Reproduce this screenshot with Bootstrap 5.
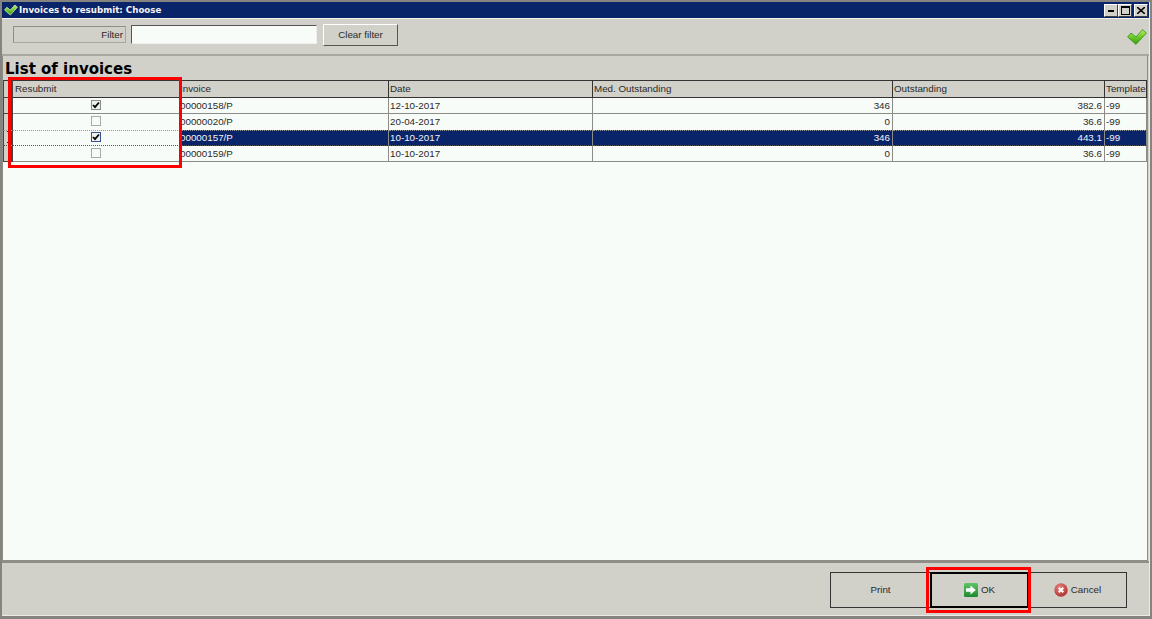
<!DOCTYPE html>
<html lang="en">
<head>
<meta charset="utf-8">
<title>Invoices to resubmit: Choose</title>
<link href="https://cdn.jsdelivr.net/npm/bootstrap@5.3.0/dist/css/bootstrap.min.css" rel="stylesheet">
<style>
html,body{height:619px;overflow:hidden;}
body{background:#85847f;font-family:"Liberation Sans",Arial,sans-serif;font-size:9.8px;color:#2a2a2a;line-height:1;}
.win{height:619px;padding:2px 2px 3px 2px;position:relative;}
.winbody{height:100%;background:#d1d0c9;border-right:1px solid #ecebe5;border-bottom:1px solid #ecebe5;}
.titlebar{height:16px;background:#0a246a;color:#f4f4f4;font-family:"DejaVu Sans",sans-serif;font-weight:700;font-size:8.7px;padding-left:2px;}
.titletext{margin-left:1px;}
.capbtn{width:14px;height:13px;background:#d1d0c9;border:1px solid;border-color:#fff #404040 #404040 #fff;color:#000;}
.capwrap{padding-right:1px;}
.cap-gap{margin-left:2px;}
.toolbar{height:38px;padding:6px 2px 0 11px;border-bottom:2px solid #a8a79f;border-top:1px solid #f2f1ec;}
.fltlabel{width:113px;height:17px;margin-top:1px;border:1px solid #8f8d87;border-right-color:#a8a79f;border-bottom-color:#a8a79f;padding-right:2px;}
.fltinput{width:186px;height:19px;margin-left:5px;background:#f8fcf8;border:1px solid;border-color:#555 #eee #eee #555;border-radius:0;padding:0 2px;font-size:10px;}
.clearbtn{width:75px;height:22px;margin-left:6px;margin-top:-1px;background:#d1d0c9;border:1px solid;border-color:#fff #555 #555 #fff;border-radius:0;font-size:9.8px;padding:0;color:#2a2a2a;}
.listpanel{flex:1 1 auto;min-height:0;border:1px solid #8f8d87;border-top:0;background:#f8fcf8;margin-right:1px;}
.listhead{height:24px;background:#d1d0c9;font-family:"DejaVu Sans",sans-serif;font-weight:700;font-size:15px;color:#000;padding:6px 0 0 2px;margin:0;line-height:1;}
.gridtbl{table-layout:fixed;width:1144px;margin:0;--bs-table-bg:transparent;border-collapse:separate;border-spacing:0;font-size:9.8px;}
.gridtbl th,.gridtbl td{height:16px;padding:0 1px;border:0;border-right:1px solid #8d8d88;border-bottom:1px solid #8d8d88;font-weight:400;white-space:nowrap;overflow:hidden;line-height:15px;color:#2a2a2a;box-shadow:none;}
.gridtbl th{height:18px;line-height:16px;background:#d1d0c9;border-right-color:#333;border-bottom-color:#333;border-top:1px solid #333;}
.gridtbl .indcell{background:#d1d0c9;border-left:1px solid #444;border-right:2px solid #444;border-bottom-color:#444;padding:0;}
.gridtbl .sel td:not(.indcell):not(.chkcell){background:#0a246a;color:#f4f4f4;}
.gridtbl .sel td{border-top:1px dotted #999;border-bottom:1px dotted #555;line-height:14px;height:16px;}
.gridtbl tr.presel td{border-bottom:0;}
.gridtbl .rescol{padding-left:2px;}
.text-end{padding-right:2px!important;}
.chkcell{text-align:center;}
.invcell{padding-left:0!important;}
.cb{display:inline-block;width:10px;height:10px;vertical-align:middle;background:#f8fcf8;border:1px solid #a9a9a4;position:relative;top:-1px;}
.cb svg{display:block;}
.cb-on{background:#eef1ee;border-color:#8a8a86;}
.sel .cb{border-color:#39508f;}
.rowmark{display:block;margin-left:3px;}
.footerbar{height:54px;border-top:2px solid #8f8d87;padding:9px 22px 0 0;}
.footbtn{width:99px;height:36px;background:#d1d0c9;border:1px solid #333;border-radius:0;font-size:9.8px;color:#2a2a2a;padding:0;margin-left:-1px;}
.footbtn svg{margin-right:3px;vertical-align:middle;}
.printbtn{width:101px;}
.okbtn{border:2px solid #000;position:relative;z-index:1;}
.redmark{position:absolute;border:3px solid #f00;pointer-events:none;z-index:5;}
.mark-a{left:8px;top:77px;width:174px;height:91px;}
.mark-b{left:926px;top:567px;width:105px;height:46px;}
</style>
</head>
<body>
<div class="win">
 <div class="winbody d-flex flex-column">
  <svg width="0" height="0" class="position-absolute" aria-hidden="true"><defs>
    <linearGradient id="gl" x1="0" y1="0" x2="0" y2="1"><stop offset="0" stop-color="#b5ec6a"/><stop offset=".55" stop-color="#66c626"/><stop offset="1" stop-color="#3b9a14"/></linearGradient>
    <linearGradient id="gb" x1="0" y1="0" x2="0" y2="1"><stop offset="0" stop-color="#5fc46a"/><stop offset="1" stop-color="#1c8a2c"/></linearGradient>
    <radialGradient id="rd" cx=".4" cy=".3" r=".8"><stop offset="0" stop-color="#e9807c"/><stop offset="1" stop-color="#a92a28"/></radialGradient>
  </defs></svg>
  <div class="titlebar d-flex align-items-center flex-shrink-0">
    <svg width="14" height="12" viewBox="0 0 20 16" class="flex-shrink-0"><path d="M.8 8 L9 15.2 L19.2 4 L15.5 .8 L9 8 L4 4 Z" fill="url(#gl)" stroke="#f2fbe6" stroke-width=".9" stroke-linejoin="round"/></svg>
    <span class="titletext">Invoices to resubmit: Choose</span>
    <div class="ms-auto d-flex capwrap">
      <span class="capbtn d-flex align-items-end justify-content-center pb-1"><svg width="7" height="2"><rect width="6" height="2" fill="#000"/></svg></span>
      <span class="capbtn d-flex align-items-center justify-content-center"><svg width="9" height="9"><rect x=".5" y=".5" width="8" height="8" fill="none" stroke="#000"/><rect width="9" height="2" fill="#000"/></svg></span>
      <span class="capbtn cap-gap d-flex align-items-center justify-content-center"><svg width="8" height="7"><path d="M0 0 L8 7 M8 0 L0 7" stroke="#000" stroke-width="1.6"/></svg></span>
    </div>
  </div>
  <div class="toolbar d-flex flex-shrink-0">
    <div class="fltlabel d-flex align-items-center justify-content-end">Filter</div>
    <input class="fltinput" type="text" aria-label="Filter">
    <button class="clearbtn" type="button">Clear filter</button>
    <svg class="ms-auto mt-1" width="20" height="16" viewBox="0 0 20 16"><path d="M.6 8 L9 15.4 L19.4 4 L15.5 .6 L9 8 L4 4 Z" fill="url(#gl)" stroke="#3f9a18" stroke-width=".9" stroke-linejoin="round"/></svg>
  </div>
  <div class="listpanel d-flex flex-column">
    <h1 class="listhead flex-shrink-0">List of invoices</h1>
    <table class="table gridtbl">
      <colgroup><col style="width:10px"><col style="width:167px"><col style="width:209px"><col style="width:204px"><col style="width:300px"><col style="width:212px"><col style="width:42px"></colgroup>
      <thead><tr><th class="indcell"></th><th class="rescol">Resubmit</th><th class="invcell">Invoice</th><th>Date</th><th>Med. Outstanding</th><th>Outstanding</th><th>Template</th></tr></thead>
      <tbody>
        <tr><td class="indcell"></td><td class="chkcell"><span class="cb cb-on"><svg width="8" height="8" viewBox="0 0 8 8"><path d="M1 4 L3 6.2 L7 1.5" fill="none" stroke="#000" stroke-width="1.8"/></svg></span></td><td class="invcell">00000158/P</td><td>12-10-2017</td><td class="text-end">346</td><td class="text-end">382.6</td><td>-99</td></tr>
        <tr class="presel"><td class="indcell"></td><td class="chkcell"><span class="cb"></span></td><td class="invcell">00000020/P</td><td>20-04-2017</td><td class="text-end">0</td><td class="text-end">36.6</td><td>-99</td></tr>
        <tr class="sel"><td class="indcell"><svg class="rowmark" width="3" height="12"><path d="M0 .5 H3 M1.5 .5 V11.5 M0 11.5 H3" stroke="#222" fill="none"/></svg></td><td class="chkcell"><span class="cb cb-on"><svg width="8" height="8" viewBox="0 0 8 8"><path d="M1 4 L3 6.2 L7 1.5" fill="none" stroke="#000" stroke-width="1.8"/></svg></span></td><td class="invcell">00000157/P</td><td>10-10-2017</td><td class="text-end">346</td><td class="text-end">443.1</td><td>-99</td></tr>
        <tr><td class="indcell"></td><td class="chkcell"><span class="cb"></span></td><td class="invcell">00000159/P</td><td>10-10-2017</td><td class="text-end">0</td><td class="text-end">36.6</td><td>-99</td></tr>
      </tbody>
    </table>
  </div>
  <div class="footerbar d-flex justify-content-end flex-shrink-0">
    <button class="footbtn printbtn" type="button">Print</button>
    <button class="footbtn okbtn" type="button"><svg width="14" height="14" viewBox="0 0 14 14"><rect width="14" height="14" rx="1.5" fill="url(#gb)"/><path d="M2 5.2 H6.5 V2.5 L11.8 7 L6.5 11.5 V8.8 H2 Z" fill="#fff"/></svg>OK</button>
    <button class="footbtn" type="button"><svg width="14" height="14" viewBox="0 0 14 14"><circle cx="7" cy="7" r="6.7" fill="url(#rd)"/><path d="M4.7 4.7 L9.3 9.3 M9.3 4.7 L4.7 9.3" stroke="#fff" stroke-width="2"/></svg>Cancel</button>
  </div>
 </div>
 <div class="redmark mark-a"></div>
 <div class="redmark mark-b"></div>
</div>
</body>
</html>
